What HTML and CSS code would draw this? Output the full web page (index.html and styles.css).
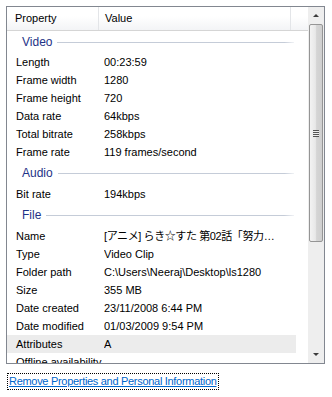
FILE: index.html
```html
<!DOCTYPE html>
<html lang="en">
<head>
    <meta charset="UTF-8">
    <title>Details</title>
    <link rel="stylesheet" href="styles.css">
</head>
<body>
    <div class="frame">
        <div class="list">
            <div class="header">
                <div class="col col-prop">Property</div>
                <div class="col col-value">Value</div>
                <div class="col col-rest"></div>
            </div>
            <div class="group first"><span>Video</span></div>
            <div class="row"><span class="prop">Length</span><span class="val">00:23:59</span></div>
            <div class="row"><span class="prop">Frame width</span><span class="val">1280</span></div>
            <div class="row"><span class="prop">Frame height</span><span class="val">720</span></div>
            <div class="row"><span class="prop">Data rate</span><span class="val">64kbps</span></div>
            <div class="row"><span class="prop">Total bitrate</span><span class="val">258kbps</span></div>
            <div class="row"><span class="prop">Frame rate</span><span class="val">119 frames/second</span></div>
            <div class="group"><span>Audio</span></div>
            <div class="row"><span class="prop">Bit rate</span><span class="val">194kbps</span></div>
            <div class="group"><span>File</span></div>
            <div class="row"><span class="prop">Name</span><span class="val cjk">[アニメ] らき☆すた 第02話「努力と結果」(1280x720 x264 AAC).mp4</span></div>
            <div class="row"><span class="prop">Type</span><span class="val">Video Clip</span></div>
            <div class="row"><span class="prop">Folder path</span><span class="val">C:\Users\Neeraj\Desktop\ls1280</span></div>
            <div class="row"><span class="prop">Size</span><span class="val">355 MB</span></div>
            <div class="row"><span class="prop">Date created</span><span class="val">23/11/2008 6:44 PM</span></div>
            <div class="row"><span class="prop">Date modified</span><span class="val">01/03/2009 9:54 PM</span></div>
            <div class="row selected"><span class="prop">Attributes</span><span class="val">A</span></div>
            <div class="row"><span class="prop">Offline availability</span><span class="val"></span></div>
        </div>
        <div class="scrollbar">
            <div class="arrow up"></div>
            <div class="thumb"><div class="grip"></div></div>
            <div class="track"></div>
            <div class="arrow down"></div>
        </div>
    </div>
    <a class="remove-link" href="#">Remove Properties and Personal Information</a>
</body>
</html>
```

FILE: styles.css
```css
body {
    margin: 0;
    padding: 6px 7px 0 6px;
    background: #ffffff;
    font-family: 'Liberation Sans', Arial, 'Noto Sans CJK JP', sans-serif;
    font-size: 11px;
    color: #000000;
}
.frame {
    display: flex;
    height: 356px;
    border: 1px solid #828790;
    overflow: hidden;
}
.list {
    flex: 1;
    min-width: 0;
    overflow: hidden;
}
.header {
    display: flex;
    height: 23px;
    border-bottom: 1px solid #d5d5d5;
    background: linear-gradient(#ffffff 0%, #ffffff 40%, #f3f4f6 100%);
}
.col {
    line-height: 23px;
    border-right: 1px solid #e3e5e8;
    padding-left: 8px;
    box-sizing: border-box;
}
.col-prop {
    width: 92px;
}
.col-value {
    width: 192px;
    padding-left: 6px;
}
.col-rest {
    flex: 1;
    border-right: none;
}
.group {
    display: flex;
    align-items: center;
    height: 24px;
    padding-left: 15px;
    color: #1e3287;
    font-size: 12px;
}
.group.first {
    height: 22px;
}
.group span {
    margin-right: 5px;
}
.group::after {
    content: '';
    flex: 1;
    margin-right: 14px;
    height: 1px;
    background: linear-gradient(90deg, #c5ccd8 0%, #c5ccd8 96%, #f0f2f5 100%);
}
.row {
    display: flex;
    height: 18px;
    line-height: 18px;
    width: 289px;
    white-space: nowrap;
}
.row.selected {
    background: #ececec;
}
.prop {
    width: 88px;
    padding-left: 9px;
    flex: none;
}
.val {
    width: 176px;
    overflow: hidden;
    text-overflow: ellipsis;
}
.val.cjk {
    letter-spacing: -0.4px;
}
.scrollbar {
    width: 16px;
    display: flex;
    flex-direction: column;
    background: #eeeeee;
}
.arrow {
    height: 17px;
    display: flex;
    align-items: center;
    justify-content: center;
}
.arrow.up::before {
    content: '';
    border-left: 3px solid transparent;
    border-right: 3px solid transparent;
    border-bottom: 3px solid #3c3c3c;
}
.arrow.down::before {
    content: '';
    border-left: 3px solid transparent;
    border-right: 3px solid transparent;
    border-top: 3px solid #3c3c3c;
}
.thumb {
    height: 216px;
    margin: 0 1px;
    border: 1px solid #959595;
    border-radius: 2px;
    background: linear-gradient(90deg, #f3f3f3 0%, #e8e8e8 45%, #d5d5d5 55%, #cfcfcf 100%);
    display: flex;
    align-items: center;
    justify-content: center;
}
.grip {
    width: 6px;
    height: 7px;
    background: repeating-linear-gradient(#555555 0px, #555555 1px, #eeeeee 1px, #eeeeee 2px);
}
.track {
    flex: 1;
}
.remove-link {
    display: inline-block;
    margin-top: 9px;
    margin-left: 1px;
    padding: 0 1px;
    border: 1px dotted #000000;
    color: #0066cc;
    line-height: 15px;
    letter-spacing: -0.3px;
}
```
